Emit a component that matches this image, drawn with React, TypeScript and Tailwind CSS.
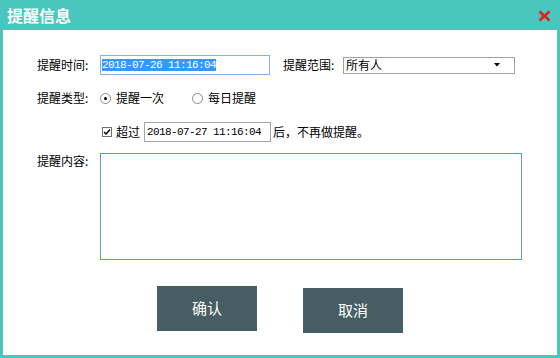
import React from 'react';

const cjk = "[font-family:'Noto_Sans_CJK_SC','Noto_Sans',sans-serif]";
const mono = "[font-family:'Liberation_Mono',monospace]";

/**
 * 标签 (左侧固定宽度)
 */
const Label: React.FC<{ children: React.ReactNode; className?: string }> = ({ children, className = '' }) => (
  <span className={`w-[63px] shrink-0 text-[12px] leading-[14px] text-black ${className}`}>{children}</span>
);

const Radio: React.FC<{ checked?: boolean }> = ({ checked = false }) => (
  <span className="flex h-[11px] w-[11px] items-center justify-center rounded-full border border-[#8a8a8a] bg-white">
    {checked && <span className="h-[3px] w-[3px] rounded-full bg-black" />}
  </span>
);

const Checkbox: React.FC = () => (
  <span className="flex h-[10px] w-[10px] items-center justify-center border border-[#6f6f6f] bg-white">
    <svg width="8" height="8" viewBox="0 0 8 8">
      <path d="M1 4 L3 6 L7 1.5" fill="none" stroke="#000" strokeWidth="1.4" />
    </svg>
  </span>
);

export default function App() {
  return (
    <div className={`flex h-[358px] w-[560px] flex-col bg-[#4ac6bf] ${cjk}`}>
      {/* Title bar */}
      <div className="flex h-[30px] shrink-0 items-center justify-between pl-[7px] pr-[9px]">
        <span className="text-[16px] font-bold leading-[18px] text-white">提醒信息</span>
        <svg width="13" height="12" viewBox="0 0 13 12" className="mt-[1px]">
          <path d="M1.5 1.5 L11.5 10.5 M11.5 1.5 L1.5 10.5" stroke="#e3201b" strokeWidth="2.6" />
        </svg>
      </div>

      {/* Body */}
      <div className="mx-[3px] mb-[3px] flex flex-1 flex-col bg-white pl-[34px] pt-[25px]">
        {/* Row 1 */}
        <div className="flex h-[20px] items-center">
          <Label>提醒时间:</Label>
          <div className="flex h-[20px] w-[170px] items-center border border-[#7eb4ea] pl-[1px]">
            <span className={`bg-[#3399ff] px-[0px] text-[11px] leading-[12px] tracking-[-0.6px] text-white ${mono}`}>
              2018-07-26 11:16:04
            </span>
          </div>
          <span className="ml-[13px] w-[60px] shrink-0 text-[12px] leading-[14px] text-black">提醒范围:</span>
          <div className="flex h-[17px] w-[172px] items-center justify-between border border-[#a0a0a0] pl-[2px] pr-[14px]">
            <span className="text-[12px] leading-[14px] text-black">所有人</span>
            <svg width="6" height="4" viewBox="0 0 6 4">
              <path d="M0 0 H6 L3 3.5 Z" fill="#000" />
            </svg>
          </div>
        </div>

        {/* Row 2 */}
        <div className="mt-[13px] flex h-[20px] items-center">
          <Label>提醒类型:</Label>
          <div className="flex items-center gap-[5px]">
            <Radio checked />
            <span className="text-[12px] leading-[14px] text-black">提醒一次</span>
          </div>
          <div className="ml-[28px] flex items-center gap-[5px]">
            <Radio />
            <span className="text-[12px] leading-[14px] text-black">每日提醒</span>
          </div>
        </div>

        {/* Row 3 */}
        <div className="mt-[14px] flex h-[20px] items-center pl-[65px]">
          <Checkbox />
          <span className="ml-[4px] text-[12px] leading-[14px] text-black">超过</span>
          <div className="ml-[4px] flex h-[20px] w-[127px] items-center border border-[#a7a7a7] pl-[2px]">
            <span className={`text-[11px] leading-[12px] tracking-[-0.6px] text-black ${mono}`}>2018-07-27 11:16:04</span>
          </div>
          <span className="ml-[2px] text-[12px] leading-[14px] text-black">后，不再做提醒。</span>
        </div>

        {/* Row 4 */}
        <div className="mt-[11px] flex items-start">
          <Label className="mt-[1px]">提醒内容:</Label>
          <div className="h-[107px] w-[422px] border border-[#5b9bd5] bg-white" />
        </div>

        {/* Buttons */}
        <div className="mt-[26px] flex items-start pl-[120px]">
          <button className="flex h-[45px] w-[100px] items-center justify-center bg-[#465e63] text-[15px] text-white">
            确认
          </button>
          <button className="ml-[46px] mt-[2px] flex h-[45px] w-[100px] items-center justify-center bg-[#465e63] text-[15px] text-white">
            取消
          </button>
        </div>
      </div>
    </div>
  );
}
